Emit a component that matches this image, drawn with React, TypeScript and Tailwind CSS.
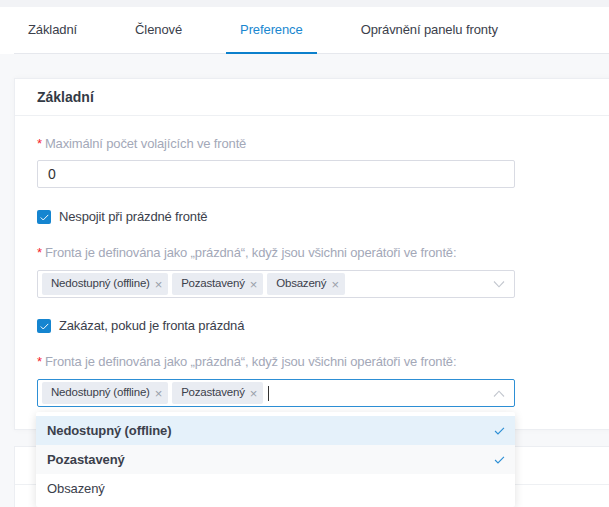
import React from 'react';

const tabs = ['Základní', 'Členové', 'Preference', 'Oprávnění panelu fronty'];

function Check({ className }: { className?: string }) {
  return (
    <svg viewBox="0 0 12 9" className={className} fill="none">
      <path d="M1 4.5L4.3 7.8L11 1" stroke="currentColor" strokeWidth="1.3" />
    </svg>
  );
}

function Chevron({ up }: { up?: boolean }) {
  return (
    <svg viewBox="0 0 12 7" className="w-[12px] h-[7px] text-[#c3c7cf]" fill="none">
      <path d={up ? 'M1 6.5L6 1.2L11 6.5' : 'M1 0.5L6 5.8L11 0.5'} stroke="currentColor" strokeWidth="1.1" />
    </svg>
  );
}

function Checkbox({ label }: { label: string }) {
  return (
    <label className="flex items-center gap-[8px] h-[14px]">
      <span className="w-[14px] h-[14px] rounded-[2px] bg-[#1585d0] flex items-center justify-center">
        <Check className="w-[9px] h-[7px] text-white" />
      </span>
      <span className="text-[13px] tracking-[-0.15px] text-[#3b404b]">{label}</span>
    </label>
  );
}

function Label({ text }: { text: string }) {
  return (
    <div className="text-[13px] leading-[16px] tracking-[-0.15px] text-[#a3a8b8]">
      <span className="text-[#f5222d] mr-[3px]">*</span>
      {text}
    </div>
  );
}

function Tag({ text }: { text: string }) {
  return (
    <span className="h-[22px] bg-[#e9ecf2] rounded-[2px] pl-[9px] pr-[6px] flex items-center gap-[5px] text-[11.5px] tracking-[-0.2px] text-[#3b404b]">
      {text}
      <span className="text-[#9aa0ab] text-[13px] leading-none">×</span>
    </span>
  );
}

function MultiSelect({ tags, open }: { tags: string[]; open?: boolean }) {
  return (
    <div
      className={`w-[478px] h-[28px] rounded-[2px] border bg-white flex items-center pl-[4px] pr-[9px] ${
        open ? 'border-[#2d8fd5]' : 'border-[#d9dbe3]'
      }`}
    >
      <div className="flex items-center gap-[4px] flex-1">
        {tags.map((t) => (
          <Tag key={t} text={t} />
        ))}
        {open && <span className="ml-[1px] w-px h-[15px] bg-[#333]" />}
      </div>
      <Chevron up={open} />
    </div>
  );
}

const options = [
  { text: 'Nedostupný (offline)', selected: true, bg: 'bg-[#e5f1fa]' },
  { text: 'Pozastavený', selected: true, bg: 'bg-[#f8f9fa]' },
  { text: 'Obsazený', selected: false, bg: 'bg-white' },
];

export default function App() {
  const empty = 'Fronta je definována jako „prázdná“, když jsou všichni operátoři ve frontě:';
  return (
    <div
      className="w-[609px] h-[507px] overflow-hidden bg-[#f7f8fa] relative"
      style={{ fontFamily: '"Liberation Sans", Arial, sans-serif' }}
    >
      <div className="h-[7px] bg-[#f2f3f6]" />
      <div className="bg-white">
        <div className="ml-[14px] flex gap-[30px] border-b border-[#e6e8ed] h-[47px]">
          {tabs.map((t, i) => (
            <div
              key={t}
              className={`px-[14px] flex items-center text-[13px] tracking-[-0.1px] -mb-px border-b-2 ${
                i === 2 ? 'text-[#1a87d0] border-[#0c80cc]' : 'text-[#3b404b] border-transparent'
              }`}
            >
              {t}
            </div>
          ))}
        </div>
      </div>

      <div className="pl-[14px] pt-[24px]">
        <div className="w-[620px] bg-white border border-[#eceef2] shadow-[0_0_6px_rgba(0,0,0,0.03)]">
          <div className="h-[37px] flex items-center px-[22px] border-b border-[#eef0f3] text-[14px] font-bold text-[#333a45]">
            Základní
          </div>
          <div className="pl-[22px] pt-[20px] pb-[22px] relative">
            <Label text="Maximální počet volajících ve frontě" />
            <div className="mt-[8px] w-[478px] h-[28px] border border-[#d9dbe3] rounded-[2px] flex items-center px-[10px] text-[14px] text-[#333]">
              0
            </div>
            <div className="mt-[22px]">
              <Checkbox label="Nespojit při prázdné frontě" />
            </div>
            <div className="mt-[21px]">
              <Label text={empty} />
            </div>
            <div className="mt-[9px]">
              <MultiSelect tags={['Nedostupný (offline)', 'Pozastavený', 'Obsazený']} />
            </div>
            <div className="mt-[21px]">
              <Checkbox label="Zakázat, pokud je fronta prázdná" />
            </div>
            <div className="mt-[21px]">
              <Label text={empty} />
            </div>
            <div className="mt-[9px]">
              <MultiSelect tags={['Nedostupný (offline)', 'Pozastavený']} open />
            </div>

            <div className="absolute left-[21px] top-[calc(100%-17px)] w-[479px] bg-white py-[4px] rounded-[2px] shadow-[0_2px_10px_rgba(0,0,0,0.12)] z-10">
              {options.map((o) => (
                <div
                  key={o.text}
                  className={`h-[29px] flex items-center justify-between pl-[11px] pr-[10px] text-[13px] tracking-[-0.1px] text-[#3b404b] ${o.bg} ${
                    o.selected ? 'font-bold' : ''
                  }`}
                >
                  {o.text}
                  {o.selected && <Check className="w-[11px] h-[8px] text-[#2d8fd5]" />}
                </div>
              ))}
            </div>
          </div>
        </div>

        <div className="mt-[16px] w-[620px] bg-white border border-[#eceef2]">
          <div className="h-[38px] border-b border-[#eef0f3]" />
          <div className="pl-[32px] pt-[20px]">
            <div className="text-[13px] text-[#a3a8b8]">Zákazníci v čekání na operátora</div>
          </div>
        </div>
      </div>
    </div>
  );
}
